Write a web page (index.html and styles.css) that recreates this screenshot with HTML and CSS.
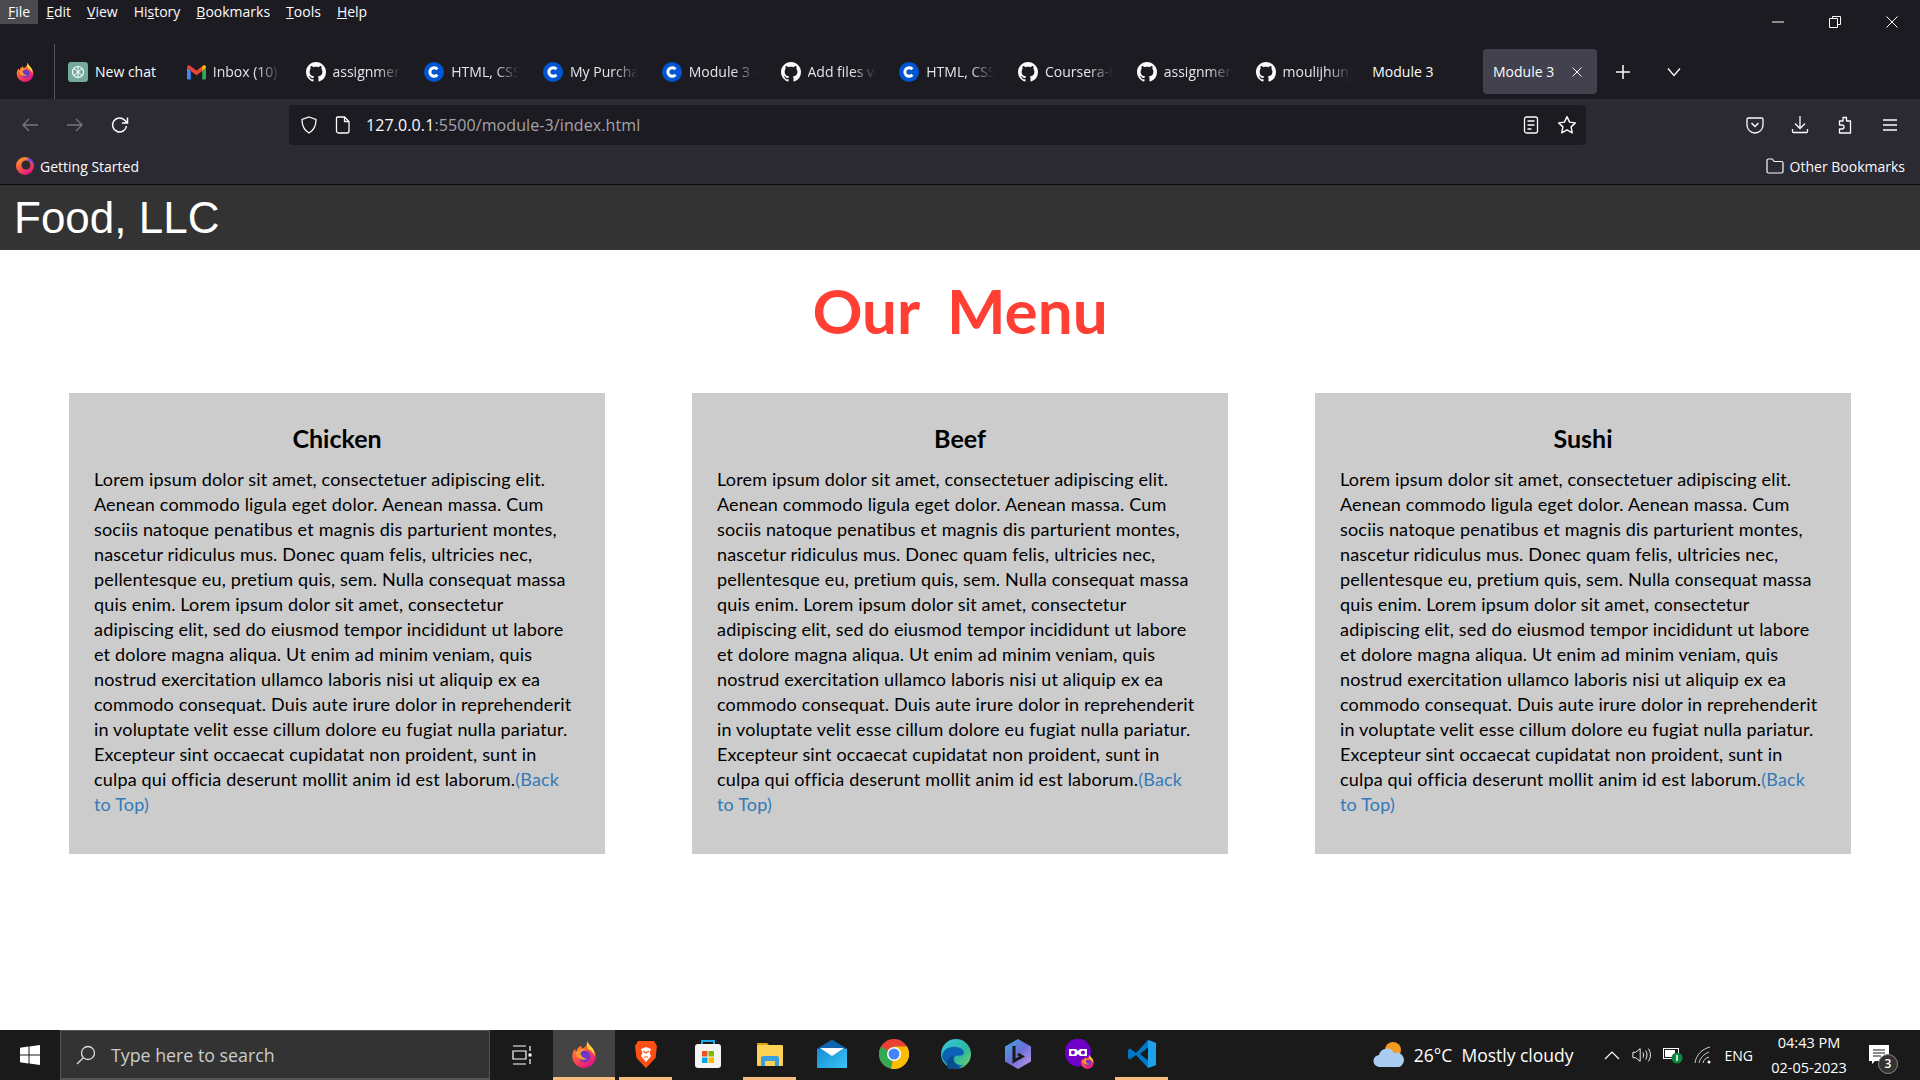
FILE: index.html
```html
<!DOCTYPE html>
<html>
    <head>
        <meta charset="utf-8">
        <title>Module 3</title>
        <link rel="stylesheet" href="styles.css">
    </head>
    <body>
        <svg class="defs" width="0" height="0">
            <defs>
                <linearGradient id="foxBody" x1="0" y1="0" x2="0.6" y2="1">
                    <stop offset="0" stop-color="#ffb32c"/>
                    <stop offset="0.5" stop-color="#ff5a3c"/>
                    <stop offset="1" stop-color="#e31587"/>
                </linearGradient>
                <linearGradient id="edgeBody" x1="0" y1="0" x2="1" y2="1">
                    <stop offset="0" stop-color="#33c6e0"/>
                    <stop offset="0.6" stop-color="#2fb8a0"/>
                    <stop offset="1" stop-color="#7fdc5a"/>
                </linearGradient>
                <linearGradient id="mailBody" x1="0" y1="0" x2="1" y2="1">
                    <stop offset="0" stop-color="#1280d0"/>
                    <stop offset="1" stop-color="#38c5f5"/>
                </linearGradient>
                <linearGradient id="copilotBody" x1="0" y1="0" x2="1" y2="1">
                    <stop offset="0" stop-color="#3fa9e0"/>
                    <stop offset="0.5" stop-color="#6b6fd8"/>
                    <stop offset="1" stop-color="#c49ae8"/>
                </linearGradient>
                <symbol id="fox" viewBox="0 0 24 24">
                    <path d="M15 1c.6 3 3 4 4.600 6.500C21.500 10 22 12 22 14a10 10 0 0 1-20 0c0-2.500 1-5 2.400-6.600 0 1.200.4 2 1.100 2.600C6 7 8 5.500 10 5c-.6 1 0 1.800 1 2.200C13 6 15 4 15 1z" fill="url(#foxBody)"/>
                    <path d="M15 1c.6 3 3 4 4.600 6.500C21 10 21.500 12 21 14c-.6-3-3-5-5-6-1-.6-1.800-4-1-7z" fill="#ffd83a"/>
                    <circle cx="12.500" cy="14" r="5" fill="#6b38c9"/>
                    <path d="M5 11c2-3 6-4 9-2.500-3 0-4.500 1.500-5 3 .6 2.500 2.500 4.500 6 4.500-3 2-7 .5-9-1.500-.8-1-1.200-2.400-1-3.500z" fill="#ff9a2c"/>
                </symbol>
                <symbol id="github" viewBox="0 0 16 16">
                    <path fill="#fbfbfe" d="M8 0C3.580 0 0 3.580 0 8c0 3.540 2.290 6.530 5.470 7.590.4.070.55-.17.55-.38 0-.19-.01-.82-.01-1.490-2.010.37-2.530-.49-2.690-.94-.09-.23-.48-.94-.82-1.130-.28-.15-.68-.52-.01-.53.63-.01 1.080.58 1.230.82.72 1.210 1.870.87 2.330.66.07-.52.28-.87.51-1.070-1.780-.2-3.640-.89-3.640-3.950 0-.87.31-1.590.82-2.150-.08-.2-.36-1.020.08-2.120 0 0 .67-.21 2.200.82.64-.18 1.320-.27 2-.27.68 0 1.360.09 2 .27 1.530-1.040 2.200-.82 2.200-.82.44 1.100.16 1.920.08 2.120.51.56.82 1.270.82 2.150 0 3.070-1.870 3.750-3.650 3.950.29.25.54.73.54 1.480 0 1.070-.01 1.930-.01 2.200 0 .21.15.46.55.38A8.013 8.013 0 0 0 16 8c0-4.420-3.580-8-8-8z"/>
                </symbol>
                <symbol id="coursera" viewBox="0 0 20 20">
                    <circle cx="10" cy="10" r="10" fill="#0056d2"/>
                    <path d="M13.400 7.200A4.300 4.300 0 1 0 13.400 12.800" fill="none" stroke="#fff" stroke-width="3"/>
                </symbol>
            </defs>
        </svg>

        <div class="browser">
            <div class="titlebar">
                <nav class="menus">
                    <span class="menu active"><u>F</u>ile</span>
                    <span class="menu"><u>E</u>dit</span>
                    <span class="menu"><u>V</u>iew</span>
                    <span class="menu">Hi<u>s</u>tory</span>
                    <span class="menu"><u>B</u>ookmarks</span>
                    <span class="menu"><u>T</u>ools</span>
                    <span class="menu"><u>H</u>elp</span>
                </nav>
                <div class="winctl">
                    <svg viewBox="0 0 12 12" width="12" height="12"><path d="M0 6h12" stroke="#fbfbfe"/></svg>
                    <svg viewBox="0 0 12 12" width="12" height="12"><path d="M3.500 2.500V.5h8v8h-3M.5 2.500h8v9h-8z" fill="none" stroke="#fbfbfe"/></svg>
                    <svg viewBox="0 0 12 12" width="12" height="12"><path d="M.5.5l11 11M11.500.5l-11 11" stroke="#fbfbfe"/></svg>
                </div>
            </div>
            <div class="tabstrip">
                <div class="view-btn"><svg class="ico" width="20" height="20"><use href="#fox"/></svg></div>
                <div class="tab">
                    <svg class="favicon" viewBox="0 0 20 20" width="20" height="20">
                        <rect width="20" height="20" rx="3" fill="#74aa9c"/>
                        <circle cx="10" cy="10" r="5.500" fill="none" stroke="#fff" stroke-width="1.200"/>
                        <path d="M6 6.500l8 7M14 6.500l-8 7M10 4.500v11" stroke="#fff" stroke-width="1"/>
                    </svg>
                    <span class="tab-label">New chat</span>
                </div>
                <div class="tab">
                    <svg class="favicon" viewBox="0 0 20 16" width="19" height="16">
                        <path d="M0 3v11.500A1.500 1.500 0 0 0 1.500 16H4V7z" fill="#4285f4"/>
                        <path d="M20 3v11.500a1.500 1.500 0 0 1-1.500 1.500H16V7z" fill="#34a853"/>
                        <path d="M0 3l4 4 6 4.500L16 7l4-4a2 2 0 0 0-3.200-1.600L10 6.500 3.200 1.400A2 2 0 0 0 0 3z" fill="#ea4335"/>
                        <path d="M16 2.500V7l4-4a2 2 0 0 0-3.200-1.600z" fill="#fbbc04"/>
                    </svg>
                    <span class="tab-label dim">Inbox (10) - moulij</span>
                </div>
                <div class="tab"><svg class="favicon" width="20" height="20"><use href="#github"/></svg><span class="tab-label dim">assignment</span></div>
                <div class="tab"><svg class="favicon" width="20" height="20"><use href="#coursera"/></svg><span class="tab-label dim">HTML, CSS, and</span></div>
                <div class="tab"><svg class="favicon" width="20" height="20"><use href="#coursera"/></svg><span class="tab-label dim">My Purchases</span></div>
                <div class="tab"><svg class="favicon" width="20" height="20"><use href="#coursera"/></svg><span class="tab-label dim">Module 3 - Co</span></div>
                <div class="tab"><svg class="favicon" width="20" height="20"><use href="#github"/></svg><span class="tab-label dim">Add files via</span></div>
                <div class="tab"><svg class="favicon" width="20" height="20"><use href="#coursera"/></svg><span class="tab-label dim">HTML, CSS, and</span></div>
                <div class="tab"><svg class="favicon" width="20" height="20"><use href="#github"/></svg><span class="tab-label dim">Coursera-HTML</span></div>
                <div class="tab"><svg class="favicon" width="20" height="20"><use href="#github"/></svg><span class="tab-label dim">assignment</span></div>
                <div class="tab"><svg class="favicon" width="20" height="20"><use href="#github"/></svg><span class="tab-label dim">moulijhunjhun</span></div>
                <div class="tab plain"><span class="tab-label">Module 3</span></div>
                <div class="tab current">
                    <span>Module 3</span>
                    <svg viewBox="0 0 10 10" width="10" height="10"><path d="M.5.5l9 9M9.500.5l-9 9" stroke="#fbfbfe" stroke-width="1"/></svg>
                </div>
                <svg class="newtab" viewBox="0 0 16 16" width="16" height="16"><path d="M8 1v14M1 8h14" stroke="#fbfbfe" stroke-width="1.500"/></svg>
                <svg class="tablist" viewBox="0 0 16 16" width="16" height="16"><path d="M2 4.500l6 7 6-7" fill="none" stroke="#fbfbfe" stroke-width="1.300"/></svg>
            </div>
            <div class="navbar">
                <div class="nav-left">
                    <svg viewBox="0 0 18 18" width="18" height="18"><path d="M17 9H2M8 3L2 9l6 6" fill="none" stroke="#77767e" stroke-width="1.300"/></svg>
                    <svg viewBox="0 0 18 18" width="18" height="18"><path d="M1 9h15M10 3l6 6-6 6" fill="none" stroke="#77767e" stroke-width="1.300"/></svg>
                    <svg viewBox="0 0 18 18" width="18" height="18"><path d="M15.500 10a7 7 0 1 1-2-6L16 6.500M16.500 1.500v5.500H11" fill="none" stroke="#fbfbfe" stroke-width="1.500"/></svg>
                </div>
                <div class="urlbar">
                    <svg viewBox="0 0 18 18" width="18" height="18"><path d="M9 1l7 2.500c0 6-1.500 10.500-7 13.500C3.500 14 2 9.500 2 3.500z" fill="none" stroke="#fbfbfe" stroke-width="1.300"/></svg>
                    <svg viewBox="0 0 16 18" width="16" height="18"><path d="M2.500 1h7L14 5.500V15a2 2 0 0 1-2 2H3.500a2 2 0 0 1-2-2V2a1 1 0 0 1 1-1zM9.500 1v4.500H14" fill="none" stroke="#fbfbfe" stroke-width="1.300"/></svg>
                    <span class="url"><b>127.0.0.1</b>:5500/module-3/index.html</span>
                    <svg class="url-end" viewBox="0 0 16 18" width="16" height="18"><rect x="1.500" y="1" width="13" height="16" rx="2" fill="none" stroke="#fbfbfe" stroke-width="1.300"/><path d="M4.500 5h7M4.500 9h7M4.500 13h4" stroke="#fbfbfe" stroke-width="1.300"/></svg>
                    <svg viewBox="0 0 18 18" width="20" height="20"><path d="M9 1.500l2.300 4.900 5.200.7-3.800 3.600 1 5.300L9 13.400l-4.700 2.600 1-5.300L1.500 7.100l5.200-.7z" fill="none" stroke="#fbfbfe" stroke-width="1.300" stroke-linejoin="round"/></svg>
                </div>
                <div class="nav-right">
                    <svg viewBox="0 0 18 18" width="18" height="18"><path d="M2.500 2h13A1.500 1.500 0 0 1 17 3.500V9a8 8 0 0 1-16 0V3.500A1.500 1.500 0 0 1 2.500 2z" fill="none" stroke="#fbfbfe" stroke-width="1.300"/><path d="M5.500 7L9 10.500 12.500 7" fill="none" stroke="#fbfbfe" stroke-width="1.500"/></svg>
                    <svg viewBox="0 0 18 18" width="18" height="18"><path d="M9 0v12M4 7.500l5 5 5-5M1.500 13v2.500a1 1 0 0 0 1 1h13a1 1 0 0 0 1-1V13" fill="none" stroke="#fbfbfe" stroke-width="1.300"/></svg>
                    <svg viewBox="0 0 18 18" width="18" height="18"><path d="M7 1.500h3.500V5h4v12h-11v-4H6a2 2 0 0 0 0-4H3.500V5H7z" fill="none" stroke="#fbfbfe" stroke-width="1.300" stroke-linejoin="round"/></svg>
                    <svg viewBox="0 0 18 18" width="18" height="18"><path d="M2 4h14M2 9h14M2 14h14" stroke="#fbfbfe" stroke-width="1.400"/></svg>
                </div>
            </div>
            <div class="bookmarks">
                <span class="bookmark">
                    <svg viewBox="0 0 18 18" width="18" height="18"><circle cx="9" cy="9" r="9" fill="url(#foxBody)"/><circle cx="10" cy="8" r="4.500" fill="#2b2a33"/><path d="M13 .8A9 9 0 0 1 18 9c-1-3-3-5-7-5.500z" fill="#7542e5"/></svg>
                    Getting Started
                </span>
                <span class="bookmark">
                    <svg viewBox="0 0 18 16" width="18" height="16"><path d="M1 13.500V2.500A1.500 1.500 0 0 1 2.500 1h3.700l2 2.500h7.300A1.500 1.500 0 0 1 17 5v8.500a1.500 1.500 0 0 1-1.500 1.500h-13A1.500 1.500 0 0 1 1 13.500z" fill="none" stroke="#fbfbfe" stroke-width="1.200"/></svg>
                    Other Bookmarks
                </span>
            </div>
        </div>

        <header class="site-header">
            <h1>Food, LLC</h1>
        </header>

        <main class="page">
            <h2 class="page-title">Our Menu</h2>
            <div class="cards">
                <section class="card">
                    <h3>Chicken</h3>
                    <p>Lorem ipsum dolor sit amet, consectetuer adipiscing elit.<br>Aenean commodo ligula eget dolor. Aenean massa. Cum<br>sociis natoque penatibus et magnis dis parturient montes,<br>nascetur ridiculus mus. Donec quam felis, ultricies nec,<br>pellentesque eu, pretium quis, sem. Nulla consequat massa<br>quis enim. Lorem ipsum dolor sit amet, consectetur<br>adipiscing elit, sed do eiusmod tempor incididunt ut labore<br>et dolore magna aliqua. Ut enim ad minim veniam, quis<br>nostrud exercitation ullamco laboris nisi ut aliquip ex ea<br>commodo consequat. Duis aute irure dolor in reprehenderit<br>in voluptate velit esse cillum dolore eu fugiat nulla pariatur.<br>Excepteur sint occaecat cupidatat non proident, sunt in<br>culpa qui officia deserunt mollit anim id est laborum.<a href="#">(Back<br>to Top)</a></p>
                </section>
                <section class="card">
                    <h3>Beef</h3>
                    <p>Lorem ipsum dolor sit amet, consectetuer adipiscing elit.<br>Aenean commodo ligula eget dolor. Aenean massa. Cum<br>sociis natoque penatibus et magnis dis parturient montes,<br>nascetur ridiculus mus. Donec quam felis, ultricies nec,<br>pellentesque eu, pretium quis, sem. Nulla consequat massa<br>quis enim. Lorem ipsum dolor sit amet, consectetur<br>adipiscing elit, sed do eiusmod tempor incididunt ut labore<br>et dolore magna aliqua. Ut enim ad minim veniam, quis<br>nostrud exercitation ullamco laboris nisi ut aliquip ex ea<br>commodo consequat. Duis aute irure dolor in reprehenderit<br>in voluptate velit esse cillum dolore eu fugiat nulla pariatur.<br>Excepteur sint occaecat cupidatat non proident, sunt in<br>culpa qui officia deserunt mollit anim id est laborum.<a href="#">(Back<br>to Top)</a></p>
                </section>
                <section class="card">
                    <h3>Sushi</h3>
                    <p>Lorem ipsum dolor sit amet, consectetuer adipiscing elit.<br>Aenean commodo ligula eget dolor. Aenean massa. Cum<br>sociis natoque penatibus et magnis dis parturient montes,<br>nascetur ridiculus mus. Donec quam felis, ultricies nec,<br>pellentesque eu, pretium quis, sem. Nulla consequat massa<br>quis enim. Lorem ipsum dolor sit amet, consectetur<br>adipiscing elit, sed do eiusmod tempor incididunt ut labore<br>et dolore magna aliqua. Ut enim ad minim veniam, quis<br>nostrud exercitation ullamco laboris nisi ut aliquip ex ea<br>commodo consequat. Duis aute irure dolor in reprehenderit<br>in voluptate velit esse cillum dolore eu fugiat nulla pariatur.<br>Excepteur sint occaecat cupidatat non proident, sunt in<br>culpa qui officia deserunt mollit anim id est laborum.<a href="#">(Back<br>to Top)</a></p>
                </section>
            </div>
        </main>

        <footer class="taskbar">
            <div class="start">
                <svg viewBox="0 0 20 20" width="20" height="20"><path fill="#fff" d="M0 2.800l8.500-1.200v8H0zM9.500 1.400L20 0v9.600H9.500zM0 10.500h8.500v8L0 17.300zM9.500 10.500H20V20L9.500 18.600z"/></svg>
            </div>
            <div class="search">
                <svg viewBox="0 0 20 20" width="20" height="20"><circle cx="12" cy="8" r="6.500" fill="none" stroke="#ddd" stroke-width="1.300"/><path d="M7.500 12.500L1 19" stroke="#ddd" stroke-width="1.300"/></svg>
                <span>Type here to search</span>
            </div>
            <div class="taskview">
                <svg viewBox="0 0 20 20" width="20" height="20"><path d="M1 1h13M1 19h13M1 6h13v8H1zM18 1v5M18 14v5" fill="none" stroke="#fff" stroke-width="1.200"/><rect x="16.500" y="8.500" width="3" height="3" fill="#fff"/></svg>
            </div>
            <div class="task-icons">
                <span class="task open focused"><svg width="28" height="28"><use href="#fox"/></svg></span>
                <span class="task open">
                    <svg viewBox="0 0 24 28" width="24" height="28"><path d="M4 1h16l3 5-1.500 12L12 28 2.500 18 1 6z" fill="#ff4f14"/><path d="M7 9l5-2 5 2-1.500 4 1.500 3-5 6-5-6 1.500-3z" fill="#fff"/><path d="M9 11l3 2 3-2M10 17h4" stroke="#ff4f14" stroke-width="1.200" fill="none"/></svg>
                </span>
                <span class="task">
                    <svg viewBox="0 0 28 30" width="28" height="30"><path d="M8 6V2h12v4" fill="none" stroke="#1fa8e8" stroke-width="2"/><rect x="1" y="5" width="26" height="24" rx="3" fill="#f4f4f4"/><rect x="8" y="12" width="5.500" height="5.500" fill="#f25022"/><rect x="14.500" y="12" width="5.500" height="5.500" fill="#7fba00"/><rect x="8" y="18.500" width="5.500" height="5.500" fill="#00a4ef"/><rect x="14.500" y="18.500" width="5.500" height="5.500" fill="#ffb900"/></svg>
                </span>
                <span class="task open">
                    <svg viewBox="0 0 28 26" width="28" height="26"><path d="M1 2h10l2 2H1z" fill="#e3a50b"/><rect x="1" y="4" width="26" height="21" rx="1" fill="#fcd257"/><path d="M5 25v-8a2 2 0 0 1 2-2h14a2 2 0 0 1 2 2v8h-4v-5H9v5z" fill="#3a9ee0"/></svg>
                </span>
                <span class="task">
                    <svg viewBox="0 0 30 28" width="30" height="28"><path d="M0 9L15 0l15 9v19H0z" fill="url(#mailBody)"/><path d="M15 0l15 9H0z" fill="#0e62ae"/><path d="M3 8h24L15 16z" fill="#fff"/></svg>
                </span>
                <span class="task">
                    <svg viewBox="0 0 30 30" width="30" height="30"><circle cx="15" cy="15" r="15" fill="#ea4335"/><path d="M15 15L2 7.500A15 15 0 0 0 12 29.700z" fill="#34a853"/><path d="M15 15l-3 14.700A15 15 0 0 0 28 7.500H15z" fill="#fbbc04"/><circle cx="15" cy="15" r="7" fill="#fff"/><circle cx="15" cy="15" r="5.500" fill="#4285f4"/></svg>
                </span>
                <span class="task">
                    <svg viewBox="0 0 30 30" width="30" height="30"><circle cx="15" cy="15" r="15" fill="url(#edgeBody)"/><path d="M1 18C1 11 8 7 15 8c5 .6 8 3 8 6 0 2-2 2.500-5 2.500-4 0-6 2-5 5s6 6 11 4A15 15 0 0 1 1 18z" fill="#0c63b4"/><path d="M7 30c-3-6 0-13 6-13-2 4 1 10 8 12-4 1.500-10 2-14 1z" fill="#0a4c8c"/></svg>
                </span>
                <span class="task">
                    <svg viewBox="0 0 26 30" width="26" height="30"><path d="M13 0l13 7.500v15L13 30 0 22.500v-15z" fill="url(#copilotBody)"/><path d="M9 7v15l8-4.500-4-2.500" fill="none" stroke="#1a1a1a" stroke-width="3"/></svg>
                </span>
                <span class="task">
                    <svg viewBox="0 0 30 30" width="30" height="30"><ellipse cx="13" cy="13.500" rx="13" ry="14" fill="#7000c8"/><path d="M4 10h7l2 2 2-2h7v7h-7l-2-2-2 2H4z" fill="#fff"/><circle cx="8" cy="13.500" r="2" fill="#7000c8"/><circle cx="18" cy="13.500" r="2" fill="#7000c8"/><use href="#fox" x="15" y="15" width="15" height="15"/></svg>
                </span>
                <span class="task open">
                    <svg viewBox="0 0 30 30" width="30" height="30"><path d="M21 1L9 14 3 9.500 1 11v8l2 1.500 6-4.500 12 13 8-3V4z" fill="#0078c8"/><path d="M21 1l8 3v22l-8 3z" fill="#1fa0e8"/><path d="M21 8.500L13 15l8 6.500z" fill="#1a1a1a"/></svg>
                </span>
            </div>
            <div class="tray">
                <svg class="weather" viewBox="0 0 32 28" width="32" height="28"><circle cx="20" cy="9" r="8" fill="#f59a23"/><path d="M7 26a6 6 0 0 1-1-12 8 8 0 0 1 15-2 7 7 0 0 1 5 14z" fill="#a9cdf0"/></svg>
                <span class="weather-text">26°C&nbsp; Mostly cloudy</span>
                <svg class="tray-caret" viewBox="0 0 16 10" width="16" height="10"><path d="M1 9l7-7 7 7" fill="none" stroke="#fff" stroke-width="1.200"/></svg>
                <svg viewBox="0 0 22 18" width="20" height="18"><path d="M1 6h3l5-4v14l-5-4H1zM12 6c1 2 1 4 0 6M15 4c2 3 2 7 0 10M18 2c3 4 3 10 0 14" fill="none" stroke="#fff" stroke-width="1"/></svg>
                <svg viewBox="0 0 20 18" width="20" height="18"><rect x="0.500" y="2.500" width="15" height="10" fill="none" stroke="#fff"/><rect x="2" y="4" width="10" height="7" fill="#fff"/><circle cx="14" cy="12" r="5.500" fill="#0a8a3c"/><path d="M14 9v6" stroke="#fff" stroke-width="1.500"/></svg>
                <svg viewBox="0 0 18 18" width="18" height="18"><path d="M1 17C2 9 8 3 16 1M5 17C6 12 10 8 15 6M9 17c.5-3 2.500-5 6-6" fill="none" stroke="#ccc" stroke-width="1"/><circle cx="15" cy="16" r="1.500" fill="#fff"/></svg>
                <span class="lang">ENG</span>
                <div class="clock">04:43 PM<br>02-05-2023</div>
                <div class="notify">
                    <svg viewBox="0 0 20 20" width="20" height="20"><path d="M0 0h20v16H6l-3 3v-3H0z" fill="#fff"/><path d="M4 5h12M4 8h12M4 11h8" stroke="#1a1a1a"/></svg>
                    <span class="badge">3</span>
                </div>
            </div>
        </footer>
    </body>
</html>
```

FILE: styles.css
```css
* {
    padding: 0;
    margin: 0;
    box-sizing: border-box;
}

html, body {
    height: 100%;
}

body {
    display: flex;
    flex-direction: column;
    height: 1080px;
    overflow: hidden;
    background-color: #fff;
    font-family: "Open Sans", "Liberation Sans", sans-serif;
}

.defs {
    position: absolute;
}

svg {
    display: block;
    flex: none;
}

/* browser chrome */

.browser {
    color: #fbfbfe;
    font-size: 14px;
}

.titlebar {
    display: flex;
    justify-content: space-between;
    height: 44px;
    background-color: #1c1b22;
}

.menus {
    display: flex;
    align-items: flex-start;
}

.menu {
    height: 24px;
    padding: 0 8px;
    line-height: 23px;
}

.menu.active {
    background-color: #4a4a4f;
}

.winctl {
    display: flex;
    gap: 45px;
    padding: 16px 22px 0 0;
}

.tabstrip {
    display: flex;
    align-items: center;
    height: 55px;
    background-color: #1c1b22;
}

.view-btn {
    display: flex;
    align-items: center;
    width: 55px;
    height: 55px;
    padding-left: 15px;
    border-right: 1px solid #55545c;
}

.tab {
    display: flex;
    align-items: center;
    gap: 7px;
    width: 118.75px;
    padding-left: 13px;
}

.tab.plain {
    padding-left: 11px;
}

.tab-label {
    width: 68px;
    overflow: hidden;
    white-space: nowrap;
    -webkit-mask-image: linear-gradient(to right, #000 65%, transparent 100%);
    mask-image: linear-gradient(to right, #000 65%, transparent 100%);
}

.tab.plain .tab-label,
.tab:nth-child(2) .tab-label {
    -webkit-mask-image: none;
    mask-image: none;
}

.tab-label.dim {
    color: #e4e4ea;
}

.tab.current {
    justify-content: space-between;
    width: 114px;
    height: 45px;
    margin-left: 3px;
    padding: 0 15px 0 10px;
    background-color: #42414d;
    border-radius: 4px;
}

.newtab {
    margin-left: 18px;
}

.tablist {
    margin-left: 35px;
}

.navbar {
    display: flex;
    align-items: center;
    height: 46px;
    padding-top: 5px;
    background-color: #2b2a33;
}

.nav-left {
    display: flex;
    gap: 27px;
    width: 289px;
    padding-left: 21px;
}

.urlbar {
    display: flex;
    align-items: center;
    width: 1297px;
    height: 40px;
    padding: 0 9px 0 11px;
    background-color: #1c1b22;
    border-radius: 4px;
}

.urlbar svg:nth-child(2) {
    margin-left: 17px;
}

.url {
    margin-left: 15px;
    font-size: 16px;
    letter-spacing: 0.1px;
    color: #a5a4ab;
}

.url b {
    font-weight: 400;
    color: #fbfbfe;
}

.url-end {
    margin-left: auto;
    margin-right: 18px;
}

.nav-right {
    display: flex;
    gap: 27px;
    padding-left: 160px;
}

.bookmarks {
    display: flex;
    align-items: center;
    justify-content: space-between;
    height: 40px;
    padding: 3px 15px 0 16px;
    background-color: #2b2a33;
    border-bottom: 1px solid #0c0c0d;
}

.bookmark {
    display: flex;
    align-items: center;
    gap: 6px;
}

/* page */

.site-header {
    height: 65px;
    padding-left: 14px;
    background-color: #333;
    color: #fff;
}

.site-header h1 {
    font-family: "Liberation Sans", Arial, sans-serif;
    font-size: 44px;
    font-weight: 400;
    line-height: 65px;
}

.page {
    flex: 1;
}

.page-title {
    margin-top: 12px;
    font-family: "Lato", sans-serif;
    font-size: 62px;
    font-weight: 700;
    line-height: 96px;
    text-align: center;
    word-spacing: 13px;
    color: #ff3f34;
}

.cards {
    display: flex;
    justify-content: space-between;
    margin-top: 35px;
    padding: 0 69px;
}

.card {
    width: 536px;
    height: 461px;
    padding: 27px 25px 0;
    background-color: #ccc;
    font-family: "Lato", sans-serif;
}

.card h3 {
    font-size: 25px;
    font-weight: 700;
    line-height: 36px;
    text-align: center;
}

.card p {
    margin-top: 11px;
    font-size: 18px;
    line-height: 25px;
    letter-spacing: 0.18px;
    white-space: nowrap;
    color: #000;
}

.card a {
    color: #337ab7;
    text-decoration: none;
}

/* windows taskbar */

.taskbar {
    display: flex;
    align-items: center;
    height: 50px;
    background-color: #1a1a1a;
    color: #fff;
}

.start {
    display: flex;
    justify-content: center;
    width: 60px;
}

.search {
    display: flex;
    align-items: center;
    gap: 15px;
    width: 430px;
    height: 50px;
    padding-left: 15px;
    background-color: #333;
    border: 1px solid #555;
    border-bottom-width: 2px;
    font-size: 17.8px;
    color: #ccc;
}

.taskview {
    display: flex;
    justify-content: center;
    width: 63px;
}

.task-icons {
    display: flex;
    gap: 0;
}

.task {
    display: flex;
    align-items: center;
    justify-content: center;
    width: 62px;
    height: 50px;
    border-bottom: 3px solid transparent;
}

.task.open {
    border-image: linear-gradient(to right, transparent 5px, #f8be7e 5px, #f8be7e 56px, transparent 56px) 1;
}

.task.focused {
    background-color: #444;
    border-image: none;
    border-bottom-color: #f8be7e;
}

.tray {
    display: flex;
    align-items: center;
    margin-left: auto;
}

.weather-text {
    margin-left: 9px;
    margin-right: 30px;
    font-size: 17.5px;
}

.tray-caret {
    margin-right: 1px;
}

.tray svg + svg {
    margin-left: 11px;
}

.lang {
    margin-left: 13px;
    margin-right: 6px;
    font-size: 14px;
}

.clock {
    width: 100px;
    font-size: 14.5px;
    line-height: 25px;
    text-align: center;
}

.notify {
    position: relative;
    width: 61px;
    height: 50px;
    padding: 15px 0 0 10px;
    border-right: 6px solid #1a1a1a;
}

.badge {
    position: absolute;
    left: 19px;
    top: 24px;
    width: 20px;
    height: 20px;
    border: 1px solid #888;
    border-radius: 50%;
    background-color: #333;
    font-size: 12px;
    font-weight: 600;
    line-height: 18px;
    text-align: center;
}
```
